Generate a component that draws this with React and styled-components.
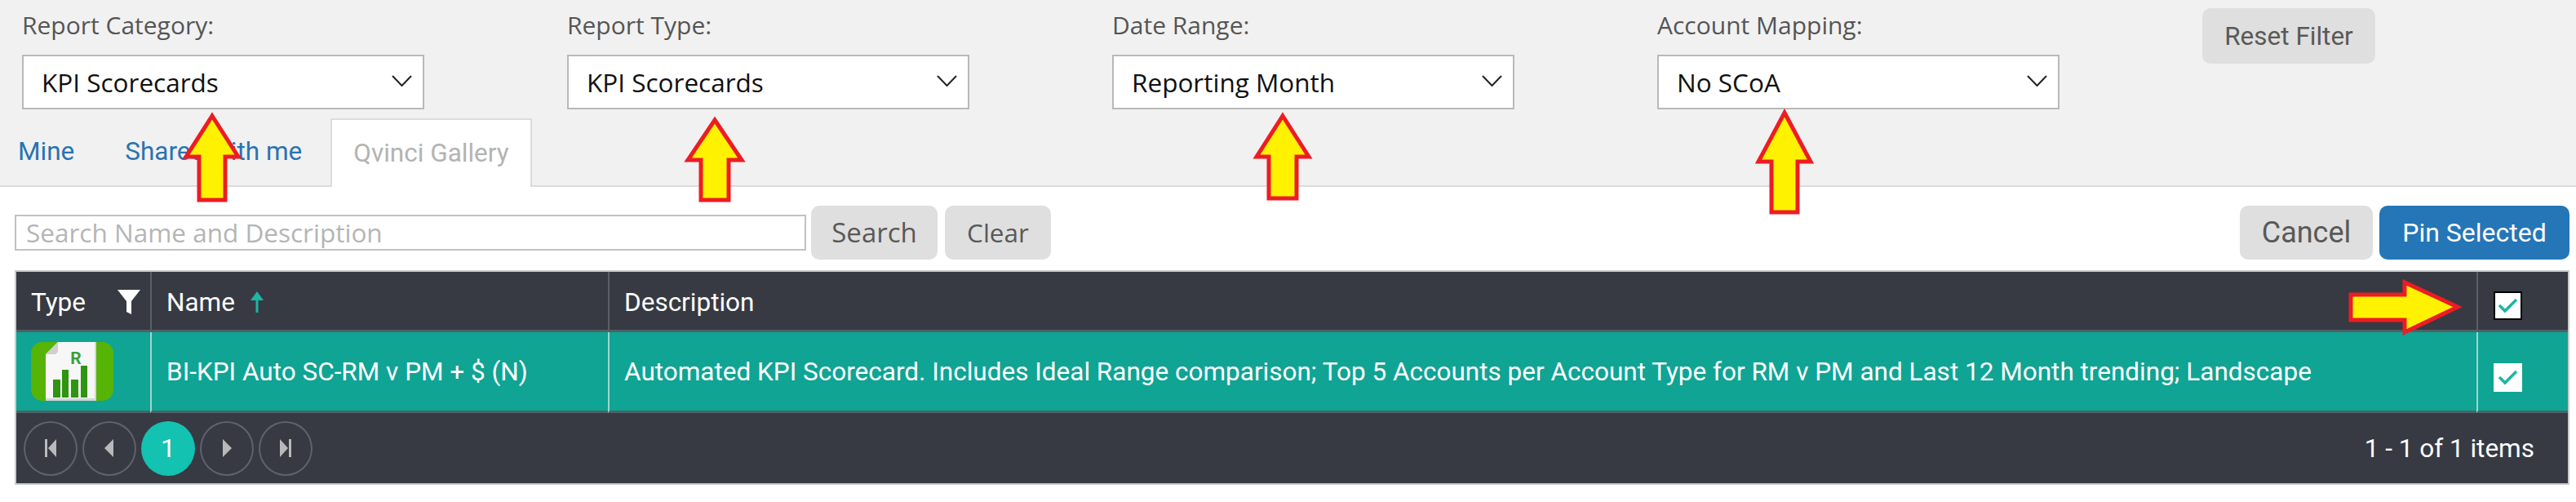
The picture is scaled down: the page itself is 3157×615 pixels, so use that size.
import React from "react";
import styled, { createGlobalStyle } from "styled-components";

const Global = createGlobalStyle`
  html, body { margin: 0; padding: 0; background: #fff; }
  body { font-family: Roboto, "Liberation Sans", sans-serif; }
  * { box-sizing: border-box; }
`;
const Page = styled.div`
  position: relative;
  width: 3157px;
  height: 615px;
  overflow: hidden;
`;
const FilterBar = styled.div`
  height: 229px;
  background: #f1f1f1;
  border-bottom: 2px solid #dcdcdc;
`;
const FilterGrid = styled.div`
  display: grid;
  grid-template-columns: repeat(5, 668px);
  padding: 10px 0 0 27px;
  height: 136px;
`;
const Field = styled.div`
  display: flex;
  flex-direction: column;
`;
const Label = styled.label`
  font-family: "Open Sans", sans-serif;
  font-size: 30px;
  line-height: 42px;
  height: 57px;
  color: #555;
`;
const SelectBox = styled.div`
  width: 493px;
  height: 67px;
  background: #fff;
  border: 2px solid #b9b9b9;
  display: flex;
  align-items: center;
  justify-content: space-between;
  padding: 0 13px 0 22px;
  font-family: "Open Sans", sans-serif;
  font-size: 31.5px;
  color: #111;
`;
const SoftButton = styled.button`
  border: none;
  border-radius: 10px;
  background: #dfdfdf;
  color: #595959;
  font-family: ${p => p.$font || "Roboto"}, sans-serif;
  font-size: ${p => p.$size || 31.5}px;
  width: ${p => p.$w}px;
  height: ${p => p.$h || 66}px;
  margin: ${p => p.$margin || 0};
  padding: 0;
`;
const PrimaryButton = styled(SoftButton)`
  background: #2476b7;
  color: #fff;
`;
const TabRow = styled.div`
  display: flex;
  align-items: flex-end;
  height: 91px;
  padding-left: 22px;
`;
const Tab = styled.div`
  font-size: 31.5px;
  color: ${p => (p.$active ? "#b3b3b3" : "#2a73b2")};
  height: ${p => (p.$active ? 84 : 82)}px;
  margin-bottom: ${p => (p.$active ? -2 : 0)}px;
  line-height: 82px;
  padding: 0 ${p => p.$pad || 0}px;
  margin-right: ${p => p.$gap || 0}px;
  background: ${p => (p.$active ? "#fff" : "transparent")};
  border: ${p => (p.$active ? "2px solid #dcdcdc" : "none")};
  border-bottom: none;
  position: relative;
`;
const Toolbar = styled.div`
  display: flex;
  align-items: center;
  padding: 22px 0 0 18px;
  height: 89px;
`;
const SearchInput = styled.div`
  width: 970px;
  height: 44px;
  border: 2px solid #c2c2c2;
  font-family: "Open Sans", sans-serif;
  font-size: 31.5px;
  line-height: 39px;
  color: #b5b5b5;
  padding-left: 12px;
  margin-right: 6px;
  overflow: hidden;
  white-space: nowrap;
`;
const Spacer = styled.div`
  flex: 1;
`;
const Grid = styled.div`
  margin: 13px 0 0 18px;
  width: 3131px;
  height: 263px;
  border: 2px solid #cbcbcb;
  background: #373a42;
  display: grid;
  grid-template-columns: 164px 561px 2290px 1fr;
  grid-template-rows: 74px 99px 1fr;
`;
const HeadCell = styled.div`
  display: flex;
  align-items: center;
  gap: 18px;
  padding-left: ${p => p.$pad ?? 18}px;
  padding-right: 12px;
  padding-top: 3px;
  justify-content: ${p => p.$justify || "flex-start"};
  color: #fff;
  font-size: 31.5px;
  border-left: ${p => (p.$first ? "none" : "2px solid #5c5f68")};
  border-bottom: 3px solid #4d6266;
`;
const RowCell = styled.div`
  display: flex;
  align-items: center;
  padding-left: ${p => p.$pad ?? 18}px;
  background: #0fa494;
  color: #fff;
  font-size: 31.5px;
  border-left: ${p => (p.$first ? "none" : "2px solid #9ed6cf")};
  border-bottom: 3px solid #4d6266;
  white-space: nowrap;
`;
const Check = styled.div`
  width: 35px;
  height: 35px;
  background: #fff;
  border: ${p => (p.$outlined ? "2px solid #000" : "1px solid #fff")};
  display: flex;
  align-items: center;
  justify-content: center;
  margin-top: ${p => p.$top || 0}px;
`;
const Footer = styled.div`
  grid-column: 1 / -1;
  display: flex;
  align-items: center;
  justify-content: space-between;
  padding: 0 41px 0 9px;
`;
const Pager = styled.div`
  display: flex;
  gap: 6px;
`;
const PageCircle = styled.div`
  width: 66px;
  height: 67px;
  border-radius: 50%;
  border: 2px solid ${p => (p.$active ? "#13c2b0" : "#5f626b")};
  background: ${p => (p.$active ? "#13c2b0" : "transparent")};
  color: #fff;
  font-size: 32px;
  display: flex;
  align-items: center;
  justify-content: center;
`;
const ItemCount = styled.div`
  color: #fff;
  font-size: 31.5px;
`;
const Overlay = styled.svg`
  position: absolute;
  left: 0;
  top: 0;
  pointer-events: none;
`;

const Chevron = () => (
  <svg width="25" height="14" viewBox="0 0 25 14" style={{ marginTop: -3 }}>
    <path d="M1 1 L12.5 13 L24 1" fill="none" stroke="#222" strokeWidth="2" />
  </svg>
);

const Tick = () => (
  <svg width="25" height="20" viewBox="0 0 25 20">
    <path d="M2 10 L9 17 L23 3" fill="none" stroke="#1db5a3" strokeWidth="3.5" />
  </svg>
);

const Filter = ({ label, value }) => (
  <Field>
    <Label>{label}</Label>
    <SelectBox>
      {value}
      <Chevron />
    </SelectBox>
  </Field>
);

const ReportIcon = () => (
  <svg width="101" height="72" viewBox="0 0 101 72">
    <rect width="101" height="72" rx="14" fill="#56b406" />
    <path d="M33 0 H80 V72 H18 V15 Z" fill="#f7f7f7" />
    <path d="M33 0 L18 15 H30 L33 12 Z" fill="#cfcfcf" />
    <path d="M78 0 H80 V72 H18 V69 H78 Z" fill="#d6d6d6" />
    <text x="55" y="27" fontFamily="Roboto, sans-serif" fontWeight="700" fontSize="21" textAnchor="middle" fill="#3f9f3a">R</text>
    <g fill="#2f9410">
      <rect x="27" y="46" width="9" height="22" />
      <rect x="38" y="34" width="8" height="34" />
      <rect x="49" y="46" width="9" height="22" />
      <rect x="61" y="29" width="8" height="39" />
    </g>
  </svg>
);

const PagerIcon = ({ d }) => (
  <svg width="18" height="30" viewBox="0 0 18 30">
    <path d={d} fill="#b9b9bb" />
  </svg>
);

const UpArrow = ({ x, tip, baseY, bottom, halfHead, halfShaft }) => (
  <path
    d={`M${x} ${tip} L${x + halfHead} ${baseY} H${x + halfShaft} V${bottom} H${x - halfShaft} V${baseY} H${x - halfHead} Z`}
    fill="#fff200"
    stroke="#ed1c24"
    strokeWidth="5"
  />
);

export default function App() {
  return (
    <Page>
      <Global />
      <FilterBar>
        <FilterGrid>
          <Filter label="Report Category:" value="KPI Scorecards" />
          <Filter label="Report Type:" value="KPI Scorecards" />
          <Filter label="Date Range:" value="Reporting Month" />
          <Filter label="Account Mapping:" value="No SCoA" />
          <SoftButton $w={212} $h={68}>Reset Filter</SoftButton>
        </FilterGrid>
        <TabRow>
          <Tab $gap={62}>Mine</Tab>
          <Tab $gap={35}>Shared with me</Tab>
          <Tab $active $pad={26}>Qvinci Gallery</Tab>
        </TabRow>
      </FilterBar>
      <Toolbar>
        <SearchInput>Search Name and Description</SearchInput>
        <SoftButton $w={155} $h={66} $font="Open Sans" $size={33}>Search</SoftButton>
        <SoftButton $w={130} $h={66} $font="Open Sans" $margin="0 0 0 9px">Clear</SoftButton>
        <Spacer />
        <SoftButton $w={163} $h={66} $size={36}>Cancel</SoftButton>
        <PrimaryButton $w={233} $h={66} $size={32} $margin="0 8px 0 8px">Pin Selected</PrimaryButton>
      </Toolbar>
      <Grid>
        <HeadCell $first $justify="space-between" $pad={18}>
          Type
          <svg width="28" height="30" viewBox="0 0 28 30">
            <path d="M0 0 H28 L17 14 V30 L11 27 V14 Z" fill="#fff" />
          </svg>
        </HeadCell>
        <HeadCell>
          Name
          <svg width="18" height="26" viewBox="0 0 18 26">
            <path d="M9 0 L17 11 H10.5 V26 H7.5 V11 H1 Z" fill="#1db5a3" />
          </svg>
        </HeadCell>
        <HeadCell>Description</HeadCell>
        <HeadCell $pad={19}>
          <Check $outlined $top={8}><Tick /></Check>
        </HeadCell>
        <RowCell $first $pad={18}><ReportIcon /></RowCell>
        <RowCell>BI-KPI Auto SC-RM v PM + $ (N)</RowCell>
        <RowCell>Automated KPI Scorecard. Includes Ideal Range comparison; Top 5 Accounts per Account Type for RM v PM and Last 12 Month trending; Landscape</RowCell>
        <RowCell $pad={19}><Check $top={14}><Tick /></Check></RowCell>
        <Footer>
          <Pager>
            <PageCircle><PagerIcon d="M2 4 H5 V26 H2 Z M16 4 V26 L6 15 Z" /></PageCircle>
            <PageCircle><PagerIcon d="M14 4 V26 L3 15 Z" /></PageCircle>
            <PageCircle $active>1</PageCircle>
            <PageCircle><PagerIcon d="M4 4 V26 L15 15 Z" /></PageCircle>
            <PageCircle><PagerIcon d="M2 4 V26 L12 15 Z M13 4 H16 V26 H13 Z" /></PageCircle>
          </Pager>
          <ItemCount>1 - 1 of 1 items</ItemCount>
        </Footer>
      </Grid>
      <Overlay width="3157" height="615" viewBox="0 0 3157 615">
        <UpArrow x={260} tip={142} baseY={192} bottom={245} halfHead={32} halfShaft={16} />
        <UpArrow x={876} tip={147} baseY={196} bottom={245} halfHead={33} halfShaft={17} />
        <UpArrow x={1572} tip={142} baseY={192} bottom={243} halfHead={32} halfShaft={17} />
        <UpArrow x={2187} tip={138} baseY={198} bottom={260} halfHead={32} halfShaft={16} />
        <path d="M2881 361 H2947 V346 L3012 376 L2947 407 V392 H2881 Z" fill="#fff200" stroke="#ed1c24" strokeWidth="5" />
      </Overlay>
    </Page>
  );
}
